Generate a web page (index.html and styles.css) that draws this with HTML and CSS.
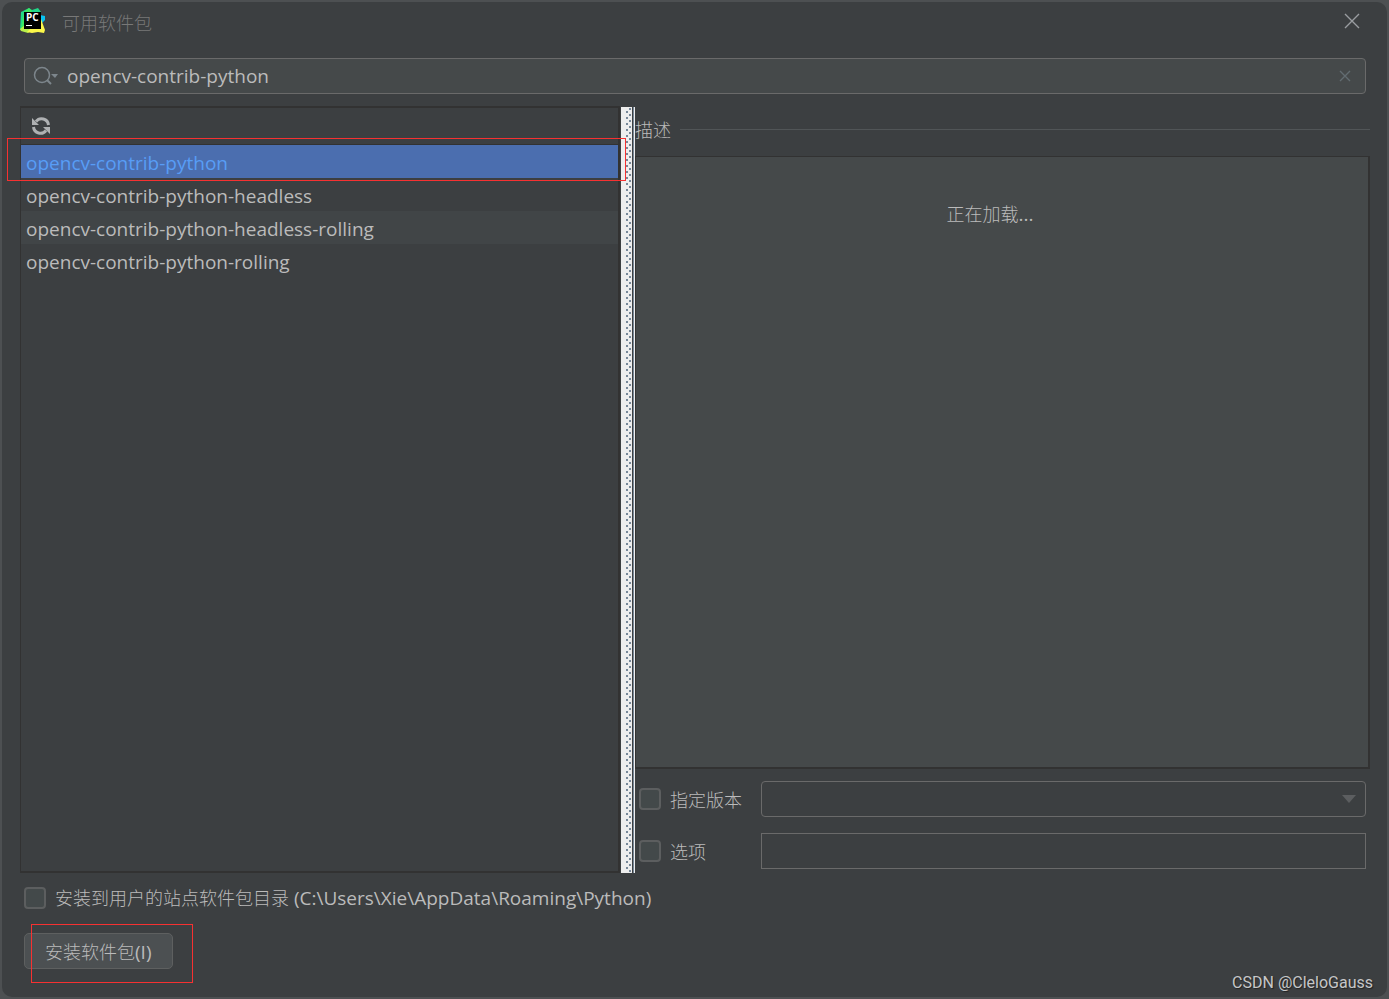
FILE: index.html
```
<!DOCTYPE html>
<html lang="zh-CN">
<head>
<meta charset="utf-8">
<title>可用软件包</title>
<link rel="stylesheet" href="styles.css">
</head>
<body>
<main class="dialog">
  <header class="titlebar">
    <svg class="app-icon" viewBox="0 0 26 26" aria-hidden="true">
      <path fill="#21d789" d="M1 4 9 0l3 2 6-2 3 4-3 6-13 11-5 1z"/>
      <path fill="#07c3f2" d="m20 7 5 1 0 4-3 3-3-1z"/>
      <path fill="#3bea62" d="m4 4 5-4 3 3-7 18-4-1z"/>
      <path fill="#b8f04a" d="m0 21 5-4 9 4-6 4-7-2z"/>
      <path fill="#fcf84a" d="m21 11 4 11-1 3-6-1-6 1-5-1 3-3 10-1z"/>
      <path fill="#000" d="M4 4h17v17H4z"/>
      <text class="app-letters" x="6" y="13">PC</text>
      <path fill="#fff" d="M6 17h6v1H6z"/>
    </svg>
    <h1 class="title">可用软件包</h1>
    <button class="close" type="button" aria-label="关闭">
      <svg viewBox="0 0 16 16"><path d="m1 1 14 14M15 1 1 15"/></svg>
    </button>
  </header>

  <div class="search">
    <svg class="search-icon" viewBox="0 0 26 20" aria-hidden="true">
      <circle cx="9" cy="9" r="7.500"/><path d="m14 14 4 4"/><path class="solid" d="M18 8h7l-3 4z"/>
    </svg>
    <input class="search-input latin" type="text" value="opencv-contrib-python" aria-label="搜索软件包">
    <button class="clear" type="button" aria-label="清除">
      <svg viewBox="0 0 12 12"><path d="m1 1 10 10M11 1 1 11"/></svg>
    </button>
  </div>

  <div class="split">
    <section class="packages">
      <div class="toolbar">
        <button class="refresh" type="button" aria-label="刷新">
          <svg viewBox="0 0 20 20">
            <path class="arc" d="M5 5.500A7 7 0 0 1 17.500 9M15 14.500A7 7 0 0 1 2.500 11"/>
            <path class="tip" d="M1 2v7h7zM19 18v-7h-7z"/>
          </svg>
        </button>
      </div>
      <ul class="list latin">
        <li class="item selected">opencv-contrib-python</li>
        <li class="item">opencv-contrib-python-headless</li>
        <li class="item striped">opencv-contrib-python-headless-rolling</li>
        <li class="item">opencv-contrib-python-rolling</li>
      </ul>
      <div class="mark mark-item"></div>
    </section>
    <div class="divider"></div>
    <section class="details">
      <h2 class="heading">描述</h2>
      <div class="description">正在加载<span class="latin">...</span></div>
      <div class="fields">
        <label class="option"><input class="check" type="checkbox">指定版本</label>
        <div class="select-wrap">
          <select class="field rounded" aria-label="指定版本"><option></option></select>
          <svg class="arrow" viewBox="0 0 14 8" aria-hidden="true"><path d="M0 0h14L7 8z"/></svg>
        </div>
        <label class="option"><input class="check" type="checkbox">选项</label>
        <input class="field" type="text" aria-label="选项">
      </div>
    </section>
  </div>

  <footer class="footer">
    <label class="option"><input class="check" type="checkbox"><span>安装到用户的站点软件包目录<span class="latin"> (C:\Users\Xie\AppData\Roaming\Python)</span></span></label>
    <div class="actions">
      <button class="install" type="button">安装软件包<span class="latin">(I)</span></button>
      <div class="mark mark-install"></div>
    </div>
  </footer>
  <div class="watermark">CSDN @CleloGauss</div>
</main>
</body>
</html>
```
FILE: styles.css
```
* { box-sizing: border-box; }

body {
  margin: 0;
  padding: 2px;
  height: 100vh;
  background: #4d5052;
  color: #bbbbbb;
  font: 300 18px/24px "Noto Sans CJK SC", sans-serif;
}

button, input, select { font: inherit; color: inherit; }

button { padding: 0; border: 0; background: none; }

svg { display: block; }

.latin {
  font-family: "Open Sans", sans-serif;
  font-size: 19px;
  font-weight: 400;
}

.dialog {
  position: relative;
  display: flex;
  flex-direction: column;
  height: 100%;
  padding: 0 17px 28px 18px;
  background: #3c3f41;
  border-radius: 10px;
}

.titlebar {
  display: flex;
  align-items: center;
  height: 38px;
}

.app-icon { width: 26px; height: 26px; }

.app-letters {
  fill: #ffffff;
  font: 700 10px "Open Sans", sans-serif;
}

.title {
  flex: 1;
  margin: 0 0 0 16px;
  padding-top: 1px;
  color: #787878;
  font-size: 18px;
  font-weight: 300;
}

.close { margin-right: 10px; }
.close svg { width: 16px; height: 16px; }
.close path, .clear path { fill: none; stroke: #9a9da0; stroke-width: 1.400; }

.search {
  display: flex;
  align-items: center;
  height: 36px;
  margin: 18px 4px 12px;
  padding: 0 14px 0 8px;
  background: #45494a;
  border: 1px solid #6a6a6a;
  border-radius: 4px;
}

.search-icon { width: 26px; height: 20px; fill: none; stroke: #7d868c; stroke-width: 2; }
.search-icon circle { stroke-width: 1.500; }
.search-icon .solid { fill: #7d868c; stroke: none; }

.search-input {
  flex: 1;
  min-width: 0;
  padding: 0;
  margin-left: 8px;
  background: none;
  border: 0;
  outline: 0;
}

.clear svg { width: 12px; height: 12px; }
.clear path { stroke: #626c71; }

.split {
  flex: 1;
  display: flex;
  min-height: 0;
}

.packages {
  position: relative;
  flex: 0 0 600px;
  border: solid #323232;
  border-width: 2px 2px 2px 1px;
}

.toolbar {
  height: 37px;
  padding: 8px 10px;
  border-bottom: 1px solid #323232;
}

.refresh svg { width: 20px; height: 20px; }
.refresh .arc { fill: none; stroke: #afb1b3; stroke-width: 3; }
.refresh .tip { fill: #afb1b3; }

.list { margin: 0; padding: 0; list-style: none; }
.item { height: 33px; padding-left: 5px; line-height: 36px; }
.striped { background: #414547; }
.selected { background: #4b6eaf; color: #589df6; }

.mark { position: absolute; border: 1px solid #f73131; z-index: 1; }
.mark-item { top: 30px; left: -14px; right: -8px; height: 43px; }

.divider {
  flex: 0 0 14px;
  margin: 1px 0 0 1px;
  background:
    linear-gradient(#eeeeee, #eeeeee) 13px 0 / 1px 100% no-repeat,
    linear-gradient(#778899, #778899) 12px 0 / 1px 100% no-repeat,
    linear-gradient(#3c3f41, #3c3f41) 11px 0 / 1px 100% no-repeat,
    conic-gradient(from 270deg at 2px 2px, #778899 90deg, transparent 0) 5px 4px / 6px 6px repeat-y,
    conic-gradient(from 270deg at 2px 2px, #778899 90deg, transparent 0) 8px 1px / 6px 6px repeat-y,
    #eeeeee;
}

.details {
  flex: 1;
  display: flex;
  flex-direction: column;
  min-width: 0;
}

.heading {
  display: flex;
  align-items: center;
  gap: 9px;
  height: 46px;
  margin: 0 0 4px;
  font-size: 18px;
  font-weight: 300;
}

.heading::after { content: ""; flex: 1; height: 1px; background: #515557; }

.description {
  flex: 1;
  padding: 44px 24px 0 0;
  text-align: center;
  background: #45494a;
  border: solid #323232;
  border-width: 1px 2px 2px 1px;
}

.fields {
  display: grid;
  grid-template-columns: auto 1fr;
  gap: 16px 19px;
  padding: 12px 4px 4px;
}

.option { display: flex; align-items: center; }

.check {
  appearance: none;
  width: 22px;
  height: 22px;
  margin: 0 9px 0 0;
  background: #43494a;
  border: 2px solid #5c5e5f;
  border-radius: 4px;
}

.select-wrap { position: relative; }

.field {
  appearance: none;
  display: block;
  width: 100%;
  height: 36px;
  padding: 0 10px;
  background: #3c3f41;
  border: 1px solid #6a6a6a;
  border-radius: 0;
}

.rounded { border-radius: 4px; }

.arrow { position: absolute; top: 14px; right: 10px; width: 14px; height: 8px; fill: #5c5e60; }

.footer { padding: 12px 4px 0; }

.actions { position: relative; margin-top: 23px; }

.install {
  display: block;
  height: 36px;
  padding: 0 20px;
  background: #4c5052;
  border: 1px solid #5e6060;
  border-radius: 5px;
}

.mark-install { left: 7px; top: -9px; width: 162px; height: 59px; }

.watermark {
  position: absolute;
  right: 14px;
  bottom: 2px;
  color: #c6c7c8;
  font: 400 16px/24px Roboto, sans-serif;
  text-shadow: 1px 1px 1px #222222;
}
```
